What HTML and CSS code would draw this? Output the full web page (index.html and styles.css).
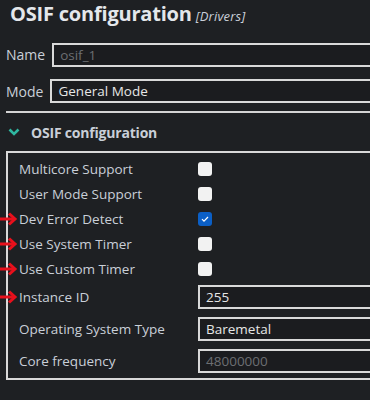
FILE: index.html
```html
<!DOCTYPE html>
<html>
<head>
<meta charset="utf-8">
<link rel="stylesheet" href="styles.css">
</head>
<body>
<div class="page">
  <div class="title-row">
    <span class="title">OSIF configuration</span>
    <span class="subtitle">[Drivers]</span>
  </div>
  <div class="field-row">
    <span class="field-label">Name</span>
    <div class="textbox placeholder">osif_1</div>
  </div>
  <div class="field-row mode-row">
    <span class="field-label">Mode</span>
    <div class="textbox">General Mode</div>
  </div>
  <div class="separator"></div>
  <div class="section-header">
    <svg class="chevron" width="12" height="8" viewBox="0 0 12 8"><path d="M1.5 1.5 L6 6 L10.5 1.5" fill="none" stroke="#2fb7a0" stroke-width="2.6"/></svg>
    <span class="section-title">OSIF configuration</span>
  </div>
  <div class="group">
    <div class="row check-row">
      <span class="label">Multicore Support</span>
      <span class="checkbox"></span>
    </div>
    <div class="row check-row">
      <span class="label">User Mode Support</span>
      <span class="checkbox"></span>
    </div>
    <div class="row check-row marked">
      <span class="label">Dev Error Detect</span>
      <span class="checkbox checked"><svg width="14" height="14" viewBox="0 0 14 14"><path d="M4 7.2 L6 9.2 L10 5" fill="none" stroke="#fff" stroke-width="1.2"/></svg></span>
      <svg class="arrow" width="18" height="14" viewBox="0 0 18 14"><path d="M0 7 H14" stroke="#e8101c" stroke-width="3"/><path d="M9 1.5 L15 7 L9 12.5" fill="none" stroke="#e8101c" stroke-width="3"/></svg>
    </div>
    <div class="row check-row marked">
      <span class="label">Use System Timer</span>
      <span class="checkbox"></span>
      <svg class="arrow" width="18" height="14" viewBox="0 0 18 14"><path d="M0 7 H14" stroke="#e8101c" stroke-width="3"/><path d="M9 1.5 L15 7 L9 12.5" fill="none" stroke="#e8101c" stroke-width="3"/></svg>
    </div>
    <div class="row check-row marked">
      <span class="label">Use Custom Timer</span>
      <span class="checkbox"></span>
      <svg class="arrow" width="18" height="14" viewBox="0 0 18 14"><path d="M0 7 H14" stroke="#e8101c" stroke-width="3"/><path d="M9 1.5 L15 7 L9 12.5" fill="none" stroke="#e8101c" stroke-width="3"/></svg>
    </div>
    <div class="row input-row marked">
      <span class="label">Instance ID</span>
      <div class="textbox">255</div>
      <svg class="arrow" width="18" height="14" viewBox="0 0 18 14"><path d="M0 7 H14" stroke="#e8101c" stroke-width="3"/><path d="M9 1.5 L15 7 L9 12.5" fill="none" stroke="#e8101c" stroke-width="3"/></svg>
    </div>
    <div class="row input-row">
      <span class="label">Operating System Type</span>
      <div class="textbox">Baremetal</div>
    </div>
    <div class="row input-row">
      <span class="label">Core frequency</span>
      <div class="textbox placeholder">48000000</div>
    </div>
  </div>
</div>
</body>
</html>
```

FILE: styles.css
```css
html, body {
  margin: 0;
  padding: 0;
  background: #1e2023;
  overflow: hidden;
}
.page {
  width: 370px;
  height: 400px;
  overflow: hidden;
  font-family: "Open Sans", "Noto Sans", sans-serif;
  color: #c9cfd8;
}
.title-row {
  height: 36px;
  padding-left: 10px;
  display: flex;
  align-items: baseline;
  gap: 4px;
  box-sizing: border-box;
}
.title {
  font-size: 20px;
  font-weight: 700;
  color: #e4e7eb;
  line-height: 27px;
  letter-spacing: -0.2px;
}
.subtitle {
  font-size: 13px;
  font-style: italic;
  color: #c9cfd8;
  letter-spacing: 0.2px;
}
.field-row {
  display: flex;
  align-items: center;
  gap: 7px;
  padding-left: 6px;
  height: 37px;
}
.mode-row {
  height: 36px;
}
.field-label {
  font-size: 14px;
  color: #c9cfd8;
}
.textbox {
  flex: 1;
  height: 24px;
  box-sizing: border-box;
  border: 2px solid #d9d9d9;
  background: #1b1c1f;
  margin-right: -12px;
  font-size: 13.5px;
  color: #e6e6e6;
  padding-left: 6px;
  display: flex;
  align-items: center;
}
.placeholder {
  color: #6c6e72;
}
.separator {
  height: 2px;
  background: #d4d4d4;
  margin-left: 6px;
  margin-top: 2px;
}
.section-header {
  height: 38px;
  display: flex;
  align-items: center;
  padding-left: 8px;
  gap: 11px;
}
.section-title {
  font-size: 14px;
  font-weight: 700;
  color: #c9cfd8;
  letter-spacing: -0.2px;
}
.group {
  margin-left: 6px;
  margin-right: -20px;
  border: 2px solid #d9d9d9;
  padding: 3px 0 1px 11px;
}
.row {
  position: relative;
  display: grid;
  grid-template-columns: 179px 1fr;
  align-items: center;
}
.check-row {
  height: 25px;
}
.input-row {
  height: 32px;
}
.label {
  font-size: 13.5px;
  color: #c9cfd8;
  white-space: nowrap;
}
.checkbox {
  width: 14px;
  height: 14px;
  border-radius: 3px;
  background: #f2f2f2;
  display: block;
}
.checkbox.checked {
  background: #0b5fc6;
}
.checkbox svg {
  display: block;
}
.input-row .textbox {
  margin-right: 0;
}
.arrow {
  position: absolute;
  left: -19px;
  top: 50%;
  margin-top: -7px;
}
```
